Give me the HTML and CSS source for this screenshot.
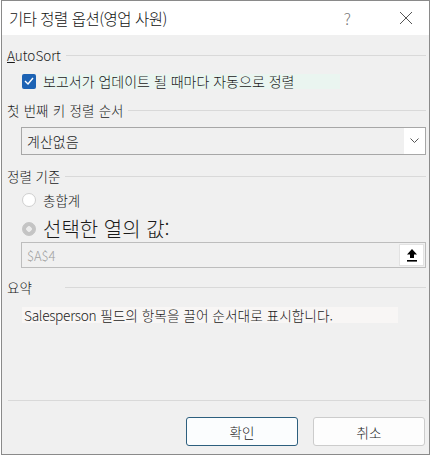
FILE: index.html
```html
<!DOCTYPE html>
<html lang="ko">
<head>
  <meta charset="UTF-8" />
  <title>기타 정렬 옵션(영업 사원)</title>
  <link rel="stylesheet" href="styles.css">
</head>
<body>
  <!-- DIALOG WINDOW -->
  <div class="dialog">

    <!-- 1) Title bar -->
    <div class="titlebar">
      <span class="title">기타 정렬 옵션(영업 사원)</span>
      <span class="help">?</span>
      <span class="close">
        <svg width="14" height="14" viewBox="0 0 14 14">
          <path d="M1 1 L13 13 M13 1 L1 13" stroke="#555" stroke-width="1" fill="none" />
        </svg>
      </span>
    </div>

    <!-- 2) Content -->
    <div class="content">
      <div class="group group-autosort">
        <span class="group-label"><u>A</u>utoSort</span>
        <span class="rule"></span>
      </div>

      <div class="check-row">
        <span class="checkbox">
          <svg width="10" height="8" viewBox="0 0 10 8">
            <polyline points="1,4 4,7 9,1" stroke="#fff" stroke-width="1.4" fill="none" />
          </svg>
        </span>
        <span class="check-text">보고서가 업데이트 될 때마다 자동으로 정렬</span>
      </div>

      <div class="group group-order">
        <span class="group-label label-wide">첫 번째 키 정렬 순서</span>
        <span class="rule"></span>
      </div>

      <div class="select">
        <span class="select-value">계산없음</span>
        <span class="select-arrow">
          <svg width="9" height="6" viewBox="0 0 9 6">
            <polyline points="0.5,0.5 4.5,4.5 8.5,0.5" stroke="#555" stroke-width="1" fill="none" />
          </svg>
        </span>
      </div>

      <div class="group group-basis">
        <span class="group-label">정렬 기준</span>
        <span class="rule"></span>
      </div>

      <div class="radio-row">
        <span class="radio"></span>
        <span class="radio-text">총합계</span>
      </div>

      <div class="radio-row radio-big">
        <span class="radio radio-on"></span>
        <span class="radio-text">선택한 열의 값:</span>
      </div>

      <div class="ref-input">
        <span class="ref-value">$A$4</span>
        <span class="ref-btn">
          <svg width="12" height="14" viewBox="0 0 12 14">
            <polygon points="6,1 11,6.5 8,6.5 8,10 4,10 4,6.5 1,6.5" fill="#000" />
            <rect x="1" y="12" width="10" height="1.6" fill="#000" />
          </svg>
        </span>
      </div>

      <div class="group group-summary">
        <span class="group-label">요약</span>
        <span class="rule"></span>
      </div>

      <div class="summary">
        <span class="summary-text"><span class="latin">Salesperson</span> 필드의 항목을 끌어 순서대로 표시합니다.</span>
      </div>

      <div class="spacer"></div>

      <!-- 3) Footer -->
      <div class="footer-rule"></div>
      <div class="buttons">
        <button class="btn btn-default">확인</button>
        <button class="btn">취소</button>
      </div>
    </div>
  </div>
</body>
</html>
```

FILE: styles.css
```css
/* Reset */
* {
  margin: 0;
  padding: 0;
  box-sizing: border-box;
}

html,
body {
  width: 433px;
  height: 456px;
  overflow: hidden;
  background: #fff;
  font-family: "Noto Sans CJK KR", "Noto Sans", sans-serif;
  font-weight: 300;
  color: #1a1a1a;
}

/* DIALOG FRAME */
.dialog {
  margin-left: 1px;
  width: 429px;
  height: 455px;
  border: 1px solid #8a8a8a;
  background: #f0f0f0;
  display: flex;
  flex-direction: column;
}

/* TITLE BAR */
.titlebar {
  height: 34px;
  background: #fff;
  display: flex;
  align-items: center;
  padding-left: 7px;
  flex-shrink: 0;
}

.title {
  font-size: 15.5px;
  letter-spacing: -0.5px;
  flex: 1;
  color: #111;
}

.help {
  font-size: 16px;
  color: #777;
  margin-right: 48px;
}

.close {
  display: flex;
  margin-right: 16px;
}

/* CONTENT */
.content {
  flex: 1;
  display: flex;
  flex-direction: column;
  padding: 0 3px 8px 5px;
}

.group {
  display: flex;
  align-items: center;
  height: 20px;
  gap: 5px;
}

.group-label {
  font-size: 13.5px;
  white-space: nowrap;
}

.label-wide {
  word-spacing: 0.5px;
}

.rule {
  flex: 1;
  height: 1px;
  background: #d9d9d9;
}

.group-autosort { margin-top: 10px; }
.group-order    { margin-top: 9px; }
.group-basis    { margin-top: 11px; }
.group-summary  { margin-top: 9px; }
.group-summary .rule { margin-left: 28px; }

/* CHECKBOX ROW */
.check-row {
  display: flex;
  align-items: center;
  height: 20px;
  margin-top: 6px;
  padding-left: 15px;
}

.checkbox {
  width: 14px;
  height: 15px;
  border-radius: 2px;
  background: #1c62b4;
  display: flex;
  align-items: center;
  justify-content: center;
  margin-right: 6px;
}

.check-text {
  font-size: 14px;
  width: 298px;
  background: #eaf5f0;
  line-height: 15px;
  padding-left: 1px;
}

/* DROPDOWN */
.select {
  margin: 7px 0 0 14px;
  height: 28px;
  border: 1px solid #a7a7a7;
  background: #f0f0f0;
  display: flex;
  align-items: center;
}

.select-value {
  flex: 1;
  font-size: 14px;
  padding-left: 5px;
}

.select-arrow {
  width: 21px;
  height: 26px;
  background: #fff;
  display: flex;
  align-items: center;
  justify-content: center;
}

/* RADIOS */
.radio-row {
  display: flex;
  align-items: center;
  height: 20px;
  margin-top: 4px;
  padding-left: 15px;
}

.radio-big {
  height: 24px;
  margin-top: 7px;
}

.radio {
  width: 14px;
  height: 14px;
  border-radius: 50%;
  border: 1px solid #cfcfcf;
  background: #fff;
  margin-right: 7px;
}

.radio-on {
  border-color: #c4c4c4;
  background: radial-gradient(circle, #ececec 0 2.5px, #c4c4c4 3px);
}

.radio-text {
  font-size: 13.5px;
}

.radio-big .radio-text {
  font-size: 20px;
  line-height: 24px;
}

/* REFERENCE INPUT */
.ref-input {
  margin: 1px 0 0 14px;
  height: 26px;
  border: 1px solid #bdbdbd;
  background: #f0f0f0;
  display: flex;
  align-items: center;
}

.ref-value {
  flex: 1;
  font-size: 13px;
  color: #a0a0a0;
  padding-left: 5px;
}

.ref-btn {
  width: 25px;
  height: 22px;
  margin-right: 1px;
  background: #fff;
  border: 1px solid #e2e2e2;
  display: flex;
  align-items: center;
  justify-content: center;
}

/* SUMMARY */
.summary {
  margin-top: 8px;
  height: 20px;
  display: flex;
  align-items: center;
  padding-left: 15px;
}

.summary-text {
  width: 376px;
  font-size: 13.7px;
  line-height: 16px;
  background: #f8f6f5;
  padding-left: 2px;
}

.latin {
  letter-spacing: -0.3px;
}

.spacer {
  flex: 1;
}

/* FOOTER */
.footer-rule {
  height: 1px;
  background: #d9d9d9;
  margin-left: 1px;
}

.buttons {
  display: flex;
  justify-content: flex-end;
  gap: 15px;
  margin-top: 16px;
  padding-right: 1px;
}

.btn {
  width: 112px;
  height: 29px;
  border: 1px solid #cccccc;
  border-radius: 3px;
  background: #fdfdfd;
  font-family: inherit;
  font-weight: inherit;
  font-size: 13.5px;
  color: #1a1a1a;
}

.btn-default {
  border-color: #2d5f7e;
  background: #fbfdfe;
}
```
